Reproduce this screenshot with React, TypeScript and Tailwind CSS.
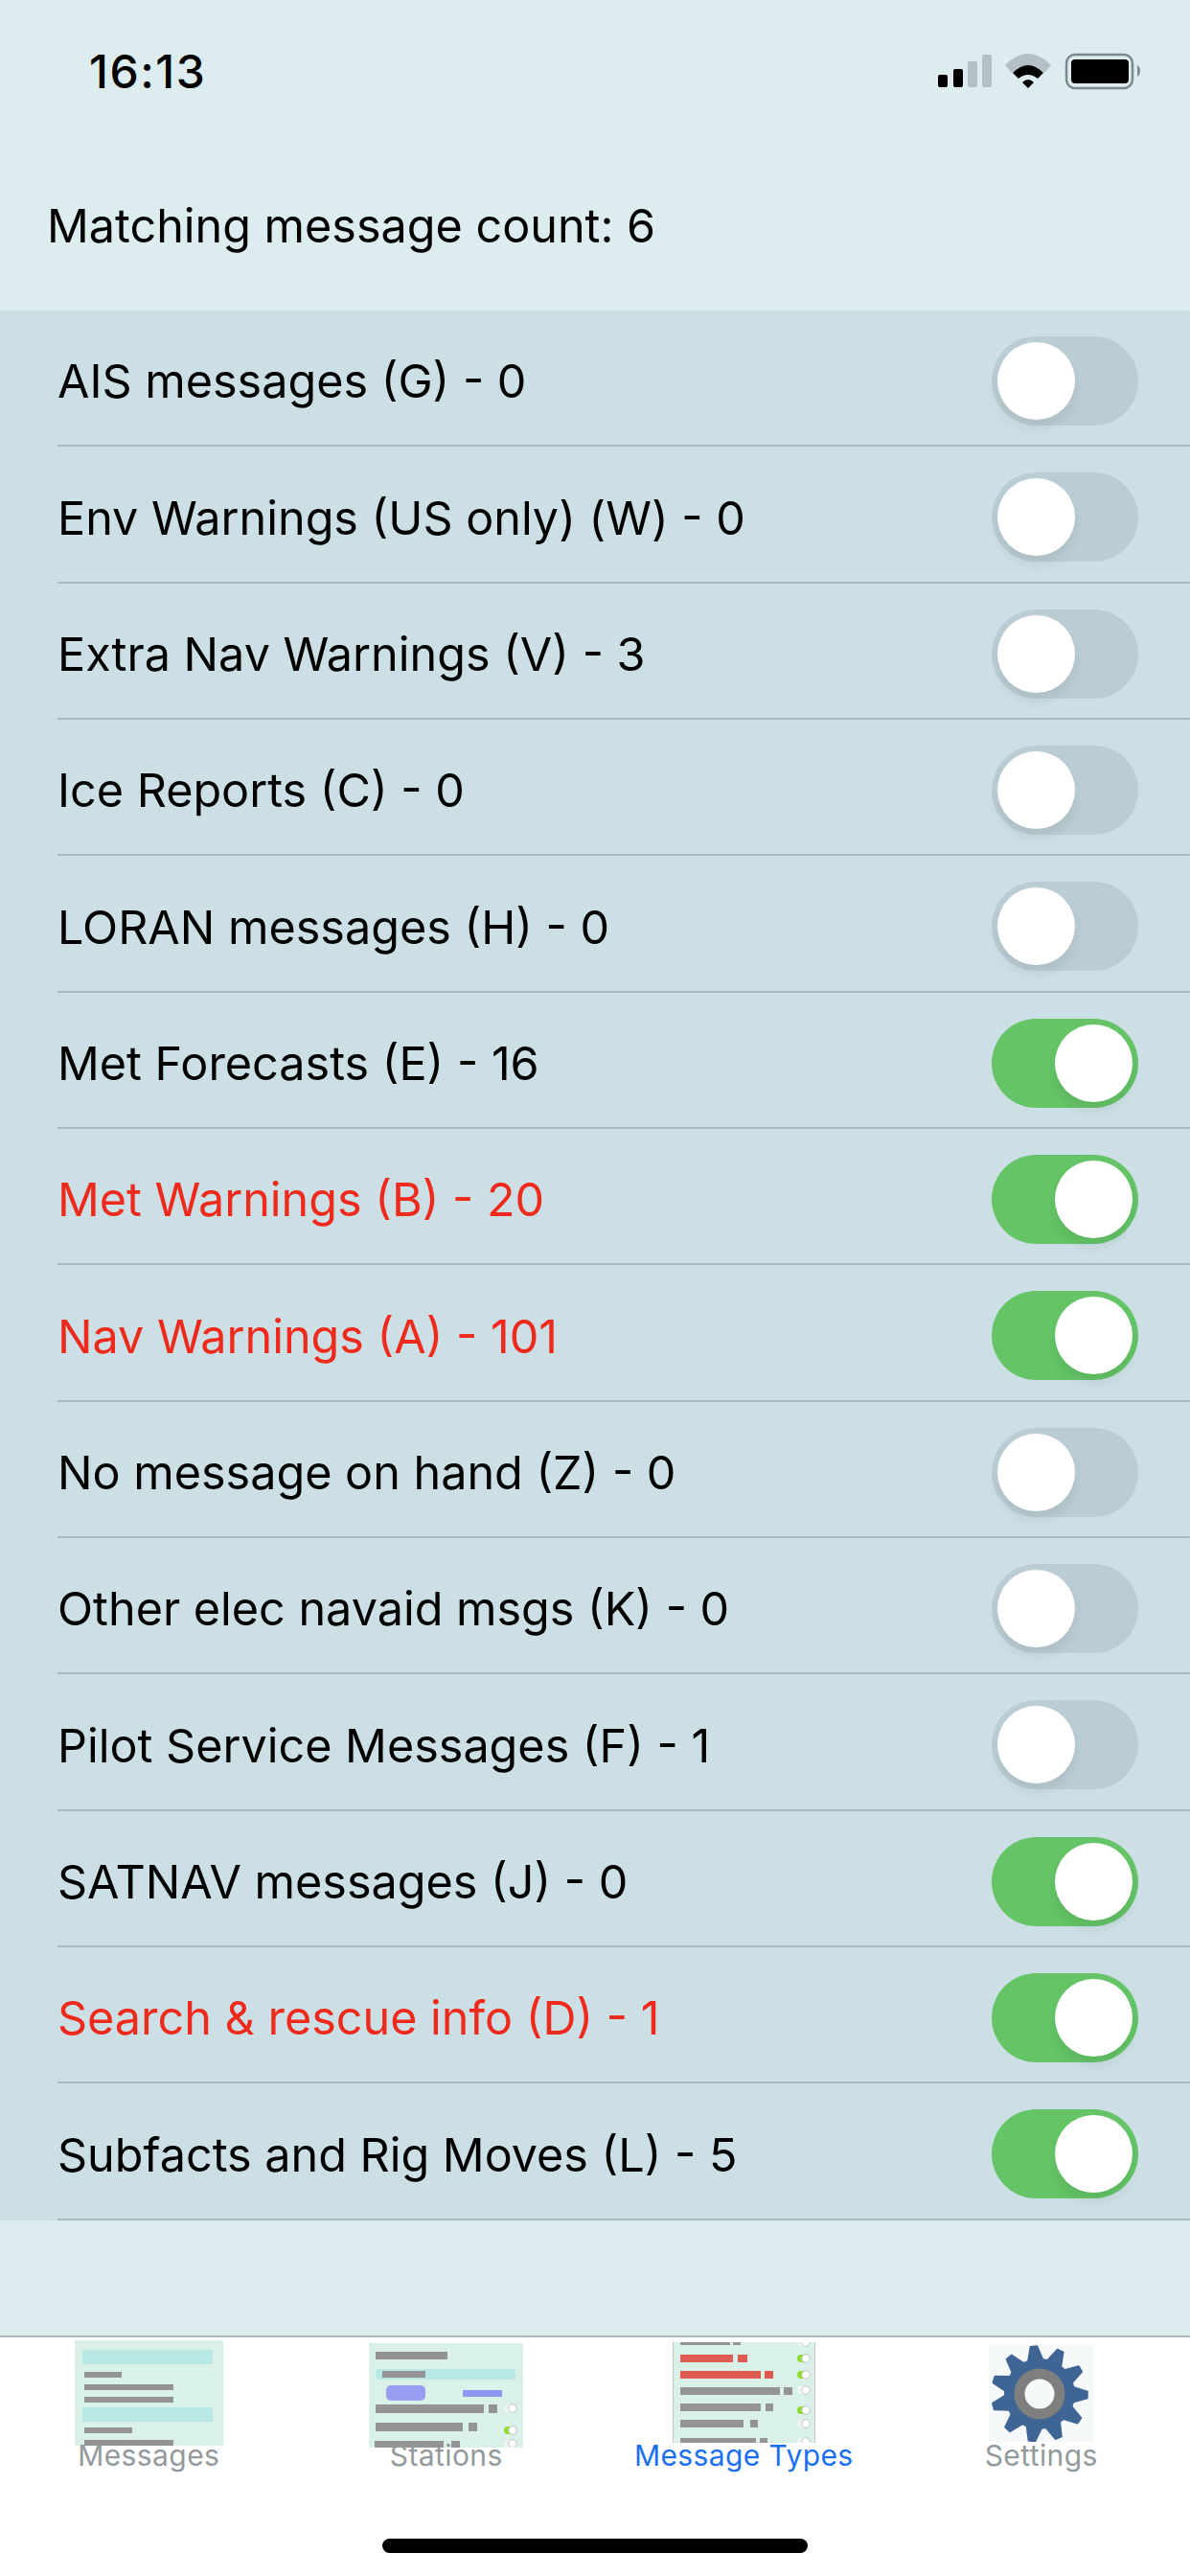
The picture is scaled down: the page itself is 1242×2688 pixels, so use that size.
import React from 'react';

type Row = { label: string; on: boolean; red?: boolean };

const rows: Row[] = [
  { label: 'AIS messages (G) - 0', on: false },
  { label: 'Env Warnings (US only) (W) - 0', on: false },
  { label: 'Extra Nav Warnings (V) - 3', on: false },
  { label: 'Ice Reports (C) - 0', on: false },
  { label: 'LORAN messages (H) - 0', on: false },
  { label: 'Met Forecasts (E) - 16', on: true },
  { label: 'Met Warnings (B) - 20', on: true, red: true },
  { label: 'Nav Warnings (A) - 101', on: true, red: true },
  { label: 'No message on hand (Z) - 0', on: false },
  { label: 'Other elec navaid msgs (K) - 0', on: false },
  { label: 'Pilot Service Messages (F) - 1', on: false },
  { label: 'SATNAV messages (J) - 0', on: true },
  { label: 'Search & rescue info (D) - 1', on: true, red: true },
  { label: 'Subfacts and Rig Moves (L) - 5', on: true },
];

const Toggle: React.FC<{ on: boolean }> = ({ on }) => (
  <div
    className={`flex h-[93px] w-[153px] shrink-0 items-center rounded-full px-[6px] ${
      on ? 'justify-end bg-[#64c466]' : 'justify-start bg-[#bbcdd4]'
    }`}
  >
    <div className="h-[81px] w-[81px] rounded-full bg-white shadow-[0_9px_12px_rgba(0,0,0,0.07)]" />
  </div>
);

const gray = '#949494';

const MiniToggle: React.FC<{ x: number; y: number; on?: boolean }> = ({ x, y, on }) => (
  <g>
    <rect x={x - 9} y={y - 4} width={12} height={8} rx={4} fill={on ? '#8fdc2e' : '#eef5f2'} />
    <circle cx={x} cy={y} r={4.3} fill="#fff" stroke="#b5b5b5" strokeWidth={0.8} />
  </g>
);

const MessagesIcon = () => (
  <svg width="155" height="110" viewBox="0 0 155 110" className="mt-[3px]">
    <rect width="155" height="110" fill="#d9f1e7" />
    <rect x="8" y="10" width="136" height="15" fill="#b9e8e5" />
    <rect x="10" y="33" width="39" height="6" fill={gray} />
    <rect x="10" y="46" width="93" height="6" fill={gray} />
    <rect x="10" y="59" width="93" height="6" fill={gray} />
    <rect x="8" y="70" width="136" height="15" fill="#b9e8e5" />
    <rect x="10" y="91" width="50" height="6" fill={gray} />
    <rect x="10" y="104" width="93" height="6" fill={gray} />
  </svg>
);

const StationsIcon = () => (
  <svg width="161" height="109" viewBox="0 0 161 109" className="mt-[6px]">
    <rect width="161" height="109" fill="#d9f1e7" />
    <rect x="7" y="9" width="75" height="8" fill={gray} />
    <rect x="7" y="27" width="146" height="11" rx="4" fill="#b9e8e5" />
    <rect x="14" y="29" width="45" height="7" fill={gray} />
    <rect x="18" y="44" width="41" height="16" rx="5" fill="#989ff3" />
    <rect x="98" y="49" width="41" height="7" fill="#8f97f0" />
    <rect x="7" y="64" width="113" height="9" fill={gray} />
    <rect x="125" y="64" width="9" height="9" fill={gray} />
    <MiniToggle x={150} y={68} />
    <rect x="7" y="83" width="91" height="9" fill={gray} />
    <rect x="104" y="83" width="9" height="9" fill={gray} />
    <MiniToggle x={150} y={91} on />
    <rect x="6" y="102" width="72" height="7" fill={gray} />
    <rect x="86" y="102" width="9" height="7" fill={gray} />
    <MiniToggle x={150} y={105} />
  </svg>
);

const TypesIcon = () => (
  <svg width="149" height="105" viewBox="0 0 149 105" className="mt-[5px]">
    <rect width="149" height="105" fill="#d9f1e7" />
    <rect width="1" height="105" fill="#c4c4c4" />
    <rect x="148" width="1" height="105" fill="#c4c4c4" />
    <rect x="8" y="0" width="52" height="3" fill={gray} />
    <rect x="63" y="0" width="8" height="3" fill={gray} />
    <MiniToggle x={139} y={0} />
    <rect x="8" y="13" width="55" height="8" fill="#df5a50" />
    <rect x="68" y="13" width="10" height="8" fill="#df5a50" />
    <MiniToggle x={139} y={17} on />
    <rect x="8" y="30" width="84" height="8" fill="#df5a50" />
    <rect x="96" y="30" width="9" height="8" fill="#df5a50" />
    <MiniToggle x={139} y={34} on />
    <rect x="8" y="47" width="104" height="8" fill={gray} />
    <rect x="116" y="47" width="9" height="8" fill={gray} />
    <MiniToggle x={139} y={50} />
    <rect x="8" y="64" width="84" height="8" fill={gray} />
    <rect x="97" y="64" width="8" height="8" fill={gray} />
    <MiniToggle x={139} y={71} on />
    <rect x="8" y="81" width="66" height="8" fill={gray} />
    <rect x="81" y="81" width="8" height="8" fill={gray} />
    <MiniToggle x={139} y={85} />
    <rect x="8" y="100" width="79" height="5" fill={gray} />
    <rect x="91" y="100" width="8" height="5" fill={gray} />
    <MiniToggle x={139} y={104} />
  </svg>
);

// gear with 11 teeth, built up from rotated trapezoids
const GearIcon = () => (
  <svg width="110" height="102" viewBox="0 0 110 102" className="mt-[7px]">
    <rect width="110" height="102" fill="#f6f9f9" />
    <g transform="translate(53 52)">
      {Array.from({ length: 11 }).map((_, i) => (
        <path
          key={i}
          d="M-8 -35 L-3.5 -50 L3.5 -50 L8 -35 Z"
          fill="#3f6594"
          stroke="#3f6594"
          strokeWidth="1.5"
          strokeLinejoin="round"
          transform={`rotate(${i * (360 / 11) - 7})`}
        />
      ))}
      <circle r="37" fill="#3f6594" />
      <circle r="26.5" fill="#7f7f7f" />
      <circle r="15.5" fill="#f6f9f9" />
    </g>
  </svg>
);

const tabs = [
  { label: 'Messages', icon: <MessagesIcon /> },
  { label: 'Stations', icon: <StationsIcon /> },
  { label: 'Message Types', icon: <TypesIcon />, active: true },
  { label: 'Settings', icon: <GearIcon /> },
];

const StatusIcons = () => (
  <svg width="220" height="44" viewBox="0 0 220 44">
    <rect x="4" y="26" width="10" height="13" rx="2" fill="#000" />
    <rect x="20" y="20" width="10" height="19" rx="2" fill="#000" />
    <rect x="35" y="12" width="10" height="27" rx="2" fill="#b4c0c3" />
    <rect x="50" y="5" width="10" height="34" rx="2" fill="#b4c0c3" />
    <path d="M74 16 Q98 -8 122 16 L115 24 Q98 8 81 24 Z" fill="#b4c0c3" />
    <path d="M82 24 Q98 8 114 24 L108 30 Q98 22 88 30 Z" fill="#000" />
    <path d="M92 34 Q98 28 104 34 L98 40 Z" fill="#000" />
    <rect x="138" y="5" width="69" height="35" rx="9" fill="none" stroke="#7d8a8d" strokeWidth="2.5" />
    <rect x="143" y="10" width="60" height="25" rx="4" fill="#000" />
    <path d="M212 16 C216 18 216 26 212 28 Z" fill="#7d8a8d" />
  </svg>
);

export default function App() {
  return (
    <div className="relative flex h-[2688px] w-[1242px] flex-col overflow-hidden bg-[#dcecef] font-['Inter',sans-serif] text-black">
      {/* Status bar */}
      <div className="flex h-[148px] items-start justify-between pl-[93px] pr-[47px] pt-[50px]">
        <span className="text-[48px] font-medium leading-[50px] tracking-[1.5px]">16:13</span>
        <div className="pt-[2px]">
          <StatusIcons />
        </div>
      </div>

      {/* Count */}
      <div className="flex h-[176px] items-center px-[49px] text-[48.5px] leading-none">
        Matching message count: 6
      </div>

      {/* List */}
      <div className="bg-[#cbdfe5]">
        {rows.map((row) => (
          <div key={row.label} className="pl-[60px]">
            <div className="flex h-[142.33px] items-center justify-between border-b-2 border-[#a8bac2] pr-[54px] pt-[7px]">
              <span className={`pt-[2px] text-[48.5px] leading-none ${row.red ? 'text-[#ef2a1c]' : 'text-black'}`}>{row.label}</span>
              <Toggle on={row.on} />
            </div>
          </div>
        ))}
      </div>

      <div className="flex-1" />

      {/* Tab bar */}
      <div className="flex h-[251px] border-t-2 border-[#a9b6ba] bg-white">
        {tabs.map((tab) => (
          <div key={tab.label} className="flex flex-1 flex-col items-center">
            <div className="h-[105px]">{tab.icon}</div>
            <span className={`relative text-[30px] leading-[36px] tracking-[0.4px] ${tab.active ? 'text-[#1a6ff0]' : 'text-[#929a9b]'}`}>{tab.label}</span>
          </div>
        ))}
      </div>

      {/* Home indicator */}
      <div className="absolute bottom-[24px] left-[399px] h-[15px] w-[444px] rounded-full bg-black" />
    </div>
  );
}
